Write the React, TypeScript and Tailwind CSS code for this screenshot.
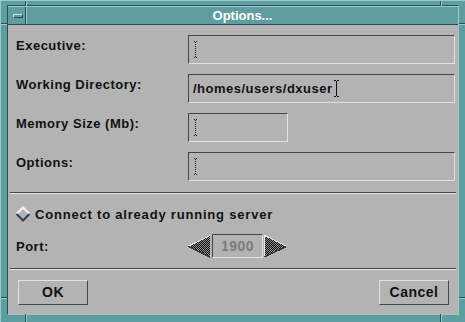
import React from "react";

function DotCursor() {
  return (
    <svg width="5" height="17" viewBox="0 0 5 17" shapeRendering="crispEdges">
      <rect x="1" y="0" width="1" height="1" fill="#222" />
      <rect x="3" y="0" width="1" height="1" fill="#222" />
      <rect x="2" y="1" width="1" height="1" fill="#222" />
      {[3, 5, 7, 9, 11, 13].map((y) => (
        <rect key={y} x="2" y={y} width="1" height="1" fill="#222" />
      ))}
      <rect x="2" y="15" width="1" height="1" fill="#222" />
      <rect x="1" y="16" width="1" height="1" fill="#222" />
      <rect x="3" y="16" width="1" height="1" fill="#222" />
    </svg>
  );
}

function BeamCursor() {
  return (
    <svg width="6" height="17" viewBox="0 0 6 17" shapeRendering="crispEdges" className="ml-[1px]">
      <rect x="0" y="0" width="2" height="1" fill="#111" />
      <rect x="3" y="0" width="2" height="1" fill="#111" />
      <rect x="2" y="1" width="1" height="15" fill="#111" />
      <rect x="0" y="16" width="2" height="1" fill="#111" />
      <rect x="3" y="16" width="2" height="1" fill="#111" />
    </svg>
  );
}

function Field({ w, children }: { w: string; children?: React.ReactNode }) {
  return (
    <div
      className={`h-[29px] ${w} border border-[#3d4853] border-b-[#e2e2e2] border-r-[#e2e2e2] flex items-center pl-[4px]`}
    >
      {children}
    </div>
  );
}

function Arrow({ dir }: { dir: "left" | "right" }) {
  const id = "chk-" + dir;
  const pts = dir === "left" ? "0,11 22,0 22,22" : "0,0 22,11 0,22";
  return (
    <svg width="23" height="23" viewBox="0 0 23 23" shapeRendering="crispEdges">
      <defs>
        <pattern id={id} width="2" height="2" patternUnits="userSpaceOnUse">
          <rect width="2" height="2" fill="#8a8a8a" />
          <rect width="1" height="1" fill="#141414" />
          <rect x="1" y="1" width="1" height="1" fill="#141414" />
        </pattern>
      </defs>
      <polygon points={pts} fill={`url(#${id})`} />
      {dir === "left" ? (
        <>
          <line x1="0.5" y1="11" x2="22" y2="0.5" stroke="#e8e8e8" strokeWidth="1" />
          <line x1="0.5" y1="11.5" x2="22" y2="22" stroke="#2e3a44" strokeWidth="1.5" />
        </>
      ) : (
        <>
          <line x1="0.5" y1="0.5" x2="22" y2="11" stroke="#e8e8e8" strokeWidth="1" />
          <line x1="0.5" y1="0" x2="0.5" y2="22" stroke="#e8e8e8" strokeWidth="1" />
          <line x1="22" y1="11.5" x2="0.5" y2="22" stroke="#2e3a44" strokeWidth="1.5" />
        </>
      )}
    </svg>
  );
}

function Row({ label, children }: { label: string; children: React.ReactNode }) {
  return (
    <div className="flex items-start">
      <div className="w-[172px] shrink-0 pt-[3px] leading-[15px]">{label}</div>
      {children}
    </div>
  );
}

export default function App() {
  return (
    <div className="w-[465px] h-[322px] relative bg-[#5f9ea0] border-t border-l border-[#9cc9ca] border-r-[#2c4d4e] border-b-[#2c4d4e] pt-[4px] pl-[6px] pr-[6px] pb-[7px] flex flex-col font-['Liberation_Sans',Arial,sans-serif] text-[13px] font-bold tracking-[0.5px] text-[#111]">
      {/* frame notches */}
      <div className="absolute left-[24px] top-0 w-[2px] h-[5px] border-l border-[#2c4d4e] border-r-[#9cc9ca] border-r" />
      <div className="absolute left-[439px] top-0 w-[2px] h-[5px] border-l border-[#2c4d4e] border-r-[#9cc9ca] border-r" />
      <div className="absolute left-[24px] bottom-0 w-[2px] h-[8px] border-l border-[#2c4d4e] border-r-[#9cc9ca] border-r" />
      <div className="absolute left-[439px] bottom-0 w-[2px] h-[8px] border-l border-[#2c4d4e] border-r-[#9cc9ca] border-r" />
      <div className="absolute left-0 top-[22px] w-[6px] h-[2px] border-t border-[#2c4d4e] border-b-[#9cc9ca] border-b" />
      <div className="absolute right-0 top-[22px] w-[6px] h-[2px] border-t border-[#2c4d4e] border-b-[#9cc9ca] border-b" />
      <div className="absolute left-0 top-[296px] w-[6px] h-[2px] border-t border-[#2c4d4e] border-b-[#9cc9ca] border-b" />
      <div className="absolute right-0 top-[296px] w-[6px] h-[2px] border-t border-[#2c4d4e] border-b-[#9cc9ca] border-b" />

      <div className="flex-1 flex flex-col border-l border-t border-[#2c4d4e] border-r-[#9cc9ca] border-b-[#9cc9ca] border-r border-b">
        {/* title bar */}
        <div className="h-[19px] flex border-t border-[#9cc9ca] border-b border-b-[#2c4d4e]">
          <div className="w-[18px] flex items-center justify-center border-r border-[#2c4d4e]">
            <div className="w-[10px] h-[4px] border border-[#c8e2e2] border-r-[#2c4d4e] border-b-[#2c4d4e] mt-[1px] ml-[2px]" />
          </div>
          <div className="w-[1px] bg-[#9cc9ca]" />
          <div className="flex-1 flex items-center justify-center text-white tracking-normal leading-none">
            Options...
          </div>
        </div>

        {/* content */}
        <div className="flex-1 bg-[#b3b3b3] flex flex-col">
          <div className="flex flex-col gap-[10px] pt-[10px] pl-[8px] pr-[3px]">
            <Row label="Executive:">
              <Field w="flex-1">
                <DotCursor />
              </Field>
            </Row>
            <Row label="Working Directory:">
              <Field w="flex-1">
                <span className="leading-[15px]">/homes/users/dxuser</span>
                <BeamCursor />
              </Field>
            </Row>
            <Row label="Memory Size (Mb):">
              <Field w="w-[100px]">
                <DotCursor />
              </Field>
            </Row>
            <Row label="Options:">
              <Field w="flex-1">
                <DotCursor />
              </Field>
            </Row>
          </div>

          <div className="mt-[11px] mx-[2px] h-[2px] border-t border-[#3d4853] border-b border-b-[#e2e2e2]" />

          <div className="mt-[10px] h-[20px] flex items-center pl-[7px]">
            <svg width="16" height="16" viewBox="0 0 16 16" className="mr-[4px]">
              <polygon points="8,1 15,8 8,15 1,8" fill="#b3b3b3" />
              <polyline points="1.5,8 8,1.5 14.5,8" fill="none" stroke="#f0f0f0" strokeWidth="2.2" />
              <polyline points="1.5,8 8,14.5 14.5,8" fill="none" stroke="#364350" strokeWidth="2.2" />
            </svg>
            <span className="leading-[15px] tracking-[0.8px]">Connect to already running server</span>
          </div>

          <div className="mt-[10px] h-[24px] flex items-center pl-[8px]">
            <div className="w-[172px] shrink-0 leading-[15px]">Port:</div>
            <Arrow dir="left" />
            <div className="w-[51px] h-[24px] border border-[#3d4853] border-b-[#e2e2e2] border-r-[#e2e2e2] flex items-center justify-center text-[#7c7c7c] text-[14px] mx-[1px]">
              1900
            </div>
            <Arrow dir="right" />
          </div>

          <div className="mt-[10px] mx-[2px] h-[2px] border-t border-[#3d4853] border-b border-b-[#e2e2e2]" />

          <div className="mt-[10px] flex justify-between pl-[10px] pr-[9px]">
            <button className="w-[70px] h-[25px] border border-[#e2e2e2] border-r-[#3d4853] border-b-[#3d4853] flex items-center justify-center text-[14px]">
              OK
            </button>
            <button className="w-[70px] h-[25px] border border-[#e2e2e2] border-r-[#3d4853] border-b-[#3d4853] flex items-center justify-center text-[14px]">
              Cancel
            </button>
          </div>
        </div>
      </div>
    </div>
  );
}
